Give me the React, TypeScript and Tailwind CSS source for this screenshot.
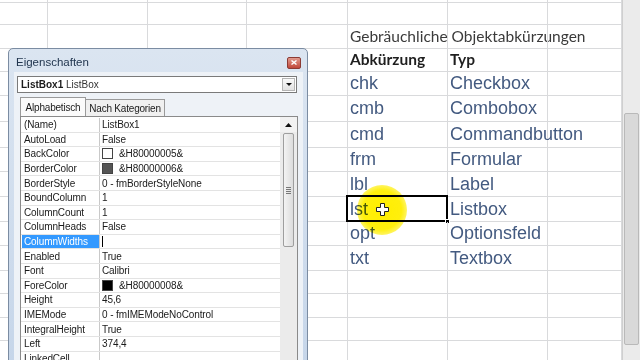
import { ReactNode } from 'react'

const rowHeights = [3, 22, 24, 23, 24, 26, 26, 24, 25, 25, 24, 25, 23, 24, 23, 20]
const colWidths = ['w-[48px]', 'w-[100px]', 'w-[99px]', 'w-[101px]', 'w-[100px]', 'w-[100px]', 'w-[74px]']
const rowClass = [
  'h-[3px]', 'h-[22px]', 'h-[24px]', 'h-[23px]', 'h-[24px]', 'h-[26px]', 'h-[26px]', 'h-[24px]',
  'h-[25px]', 'h-[25px]', 'h-[24px]', 'h-[25px]', 'h-[23px]', 'h-[24px]', 'h-[23px]', 'h-[20px]',
]

const abbrevs: [string, string][] = [
  ['chk', 'Checkbox'],
  ['cmb', 'Combobox'],
  ['cmd', 'Commandbutton'],
  ['frm', 'Formular'],
  ['lbl', 'Label'],
  ['lst', 'Listbox'],
  ['opt', 'Optionsfeld'],
  ['txt', 'Textbox'],
]

type Prop = { name: string; value: string; swatch?: string; selected?: boolean }

const props: Prop[] = [
  { name: '(Name)', value: 'ListBox1' },
  { name: 'AutoLoad', value: 'False' },
  { name: 'BackColor', value: '&H80000005&', swatch: 'bg-white' },
  { name: 'BorderColor', value: '&H80000006&', swatch: 'bg-[#555555]' },
  { name: 'BorderStyle', value: '0 - fmBorderStyleNone' },
  { name: 'BoundColumn', value: '1' },
  { name: 'ColumnCount', value: '1' },
  { name: 'ColumnHeads', value: 'False' },
  { name: 'ColumnWidths', value: '', selected: true },
  { name: 'Enabled', value: 'True' },
  { name: 'Font', value: 'Calibri' },
  { name: 'ForeColor', value: '&H80000008&', swatch: 'bg-black' },
  { name: 'Height', value: '45,6' },
  { name: 'IMEMode', value: '0 - fmIMEModeNoControl' },
  { name: 'IntegralHeight', value: 'True' },
  { name: 'Left', value: '374,4' },
  { name: 'LinkedCell', value: '' },
]

function cellContent(row: number, col: number): ReactNode {
  if (row === 2 && col === 4) {
    return <span className="font-['Lato','Liberation_Sans',sans-serif] text-[15.5px] text-[#3b3b3b]">Gebräuchliche Objektabkürzungen</span>
  }
  if (row === 3 && col === 4) {
    return <span className="font-['Lato','Liberation_Sans',sans-serif] text-[15.5px] font-bold text-[#1f1f1f]">Abkürzung</span>
  }
  if (row === 3 && col === 5) {
    return <span className="font-['Lato','Liberation_Sans',sans-serif] text-[15.5px] font-bold text-[#1f1f1f]">Typ</span>
  }
  const i = row - 4
  if (i >= 0 && i < abbrevs.length && (col === 4 || col === 5)) {
    return (
      <span className="font-['Liberation_Sans',Arial,sans-serif] text-[18px] text-[#435a80]">
        {abbrevs[i][col === 4 ? 0 : 1]}
      </span>
    )
  }
  return null
}

function Sheet() {
  return (
    <div className="flex h-full">
      <div className="flex w-[622px] flex-col">
        {rowHeights.map((_, r) => (
          <div key={r} className={`flex shrink-0 border-b border-[#d9dadc] ${rowClass[r]}`}>
            {colWidths.map((w, c) => (
              <div
                key={c}
                className={`relative flex shrink-0 items-center overflow-visible whitespace-nowrap border-r border-[#d9dadc] pl-[2px] ${w}`}
              >
                {cellContent(r, c)}
                {r === 9 && c === 4 && (
                  <div className="absolute -left-[2px] -top-[2px] -right-[1px] -bottom-[1px] border-2 border-black">
                    <div className="absolute -right-[4px] -bottom-[4px] h-[5px] w-[5px] border border-white bg-black" />
                  </div>
                )}
              </div>
            ))}
          </div>
        ))}
      </div>
      <div className="flex w-[18px] flex-col border-l border-[#cfcfcf] bg-[#ebebeb]">
        <div className="h-[113px]" />
        <div className="mx-[1px] h-[232px] rounded-[2px] border border-[#b9b9b9] bg-[#d9d9d9]" />
      </div>
    </div>
  )
}

function PropertyGrid() {
  return (
    <div className="mr-[5px] ml-[6px] flex flex-1 border border-[#8a8a8a] bg-white font-['Liberation_Sans',Arial,sans-serif] text-[10px] tracking-[-0.1px] text-[#1a1a1a]">
      <div className="flex flex-1 flex-col pt-[1px]">
        {props.map((p) => (
          <div key={p.name} className="flex h-[14.6px] shrink-0 border-b border-[#e3e3e3]">
            <div className="flex w-[79px] shrink-0 border-r border-[#c9c9c9]">
              <div
                className={`ml-[1px] flex flex-1 items-center pl-[2px] ${p.selected ? 'bg-[#3399ff] text-white' : ''}`}
              >
                {p.name}
              </div>
            </div>
            <div className="flex flex-1 items-center gap-[6px] pl-[2px]">
              {p.swatch && <div className={`h-[11px] w-[11px] border border-[#444] ${p.swatch}`} />}
              {p.selected && <div className="h-[11px] w-[1px] bg-black" />}
              <span>{p.value}</span>
            </div>
          </div>
        ))}
      </div>
      <div className="flex w-[17px] shrink-0 flex-col bg-[#ebebeb]">
        <div className="flex h-[15px] items-center justify-center bg-[#f2f2f2]">
          <svg width="7" height="4" viewBox="0 0 7 4">
            <path d="M0 4 L3.5 0 L7 4 Z" fill="#111" />
          </svg>
        </div>
        <div className="mt-[1px] ml-[3px] flex h-[114px] w-[11px] items-center justify-center rounded-[2px] border border-[#9e9e9e] bg-gradient-to-r from-[#f3f3f3] to-[#dcdcdc]">
          <div className="flex flex-col gap-[1px]">
            <div className="h-[1px] w-[5px] bg-[#777]" />
            <div className="h-[1px] w-[5px] bg-[#777]" />
            <div className="h-[1px] w-[5px] bg-[#777]" />
            <div className="h-[1px] w-[5px] bg-[#777]" />
          </div>
        </div>
      </div>
    </div>
  )
}

function PropertiesWindow() {
  return (
    <div className="absolute left-[8px] top-[48px] flex h-[330px] w-[300px] flex-col rounded-t-[5px] border border-[#7b8ca2] bg-gradient-to-b from-[#dbe5f1] to-[#c5d5e9] font-['Liberation_Sans',Arial,sans-serif]">
      <div className="flex h-[23px] shrink-0 items-center justify-between pt-[4px] pl-[7px] pr-[6px]">
        <span className="text-[11.5px] text-[#22364f]">Eigenschaften</span>
        <div className="flex h-[12px] w-[14px] items-center justify-center rounded-[2px] border border-[#8c3b34] bg-gradient-to-b from-[#e09a8e] to-[#c0463a]">
          <svg width="6" height="5" viewBox="0 0 6 5">
            <path d="M0.5 0.5 L5.5 4.5 M5.5 0.5 L0.5 4.5" stroke="white" strokeWidth="1.4" />
          </svg>
        </div>
      </div>
      <div className="mr-[4px] ml-[5px] flex flex-1 flex-col bg-[#eef2f7] pt-[4px]">
        <div className="ml-[3px] mr-[6px] flex h-[17px] items-center justify-between border border-[#7a7a7a] bg-white pl-[3px] pr-[1px] text-[10px]">
          <span className="text-[#1a1a1a]">
            <b>ListBox1</b> <span className="text-[#333]">ListBox</span>
          </span>
          <div className="flex h-[13px] w-[13px] items-center justify-center border border-[#b5b5b5] bg-gradient-to-b from-[#fafafa] to-[#e2e2e2]">
            <svg width="6" height="3" viewBox="0 0 6 3">
              <path d="M0 0 L6 0 L3 3 Z" fill="#111" />
            </svg>
          </div>
        </div>
        <div className="mt-[4px] ml-[6px] flex h-[19px] items-end text-[10px] tracking-[-0.2px] text-[#1a1a1a]">
          <div className="flex h-[19px] w-[66px] items-center justify-center border border-b-0 border-[#9a9a9a] bg-[#fbfbfb]">
            Alphabetisch
          </div>
          <div className="flex h-[17px] w-[79px] items-center justify-center border border-b-0 border-l-0 border-[#9a9a9a] bg-[#f0f0f0]">
            Nach Kategorien
          </div>
        </div>
        <PropertyGrid />
      </div>
    </div>
  )
}

export default function App() {
  return (
    <div className="relative h-[360px] w-[640px] overflow-hidden bg-white">
      <Sheet />
      <PropertiesWindow />
      <div className="pointer-events-none absolute left-[357px] top-[185px] h-[50px] w-[50px] rounded-full bg-[radial-gradient(circle,rgba(255,238,0,1)_0%,rgba(255,238,0,0.95)_55%,rgba(255,238,0,0)_100%)] mix-blend-multiply" />
      <svg className="absolute left-[376px] top-[203px]" width="13" height="13" viewBox="0 0 13 13">
        <path d="M4.5 0.5 H8.5 V4.5 H12.5 V8.5 H8.5 V12.5 H4.5 V8.5 H0.5 V4.5 H4.5 Z" fill="white" stroke="#222" strokeWidth="1" />
      </svg>
    </div>
  )
}
